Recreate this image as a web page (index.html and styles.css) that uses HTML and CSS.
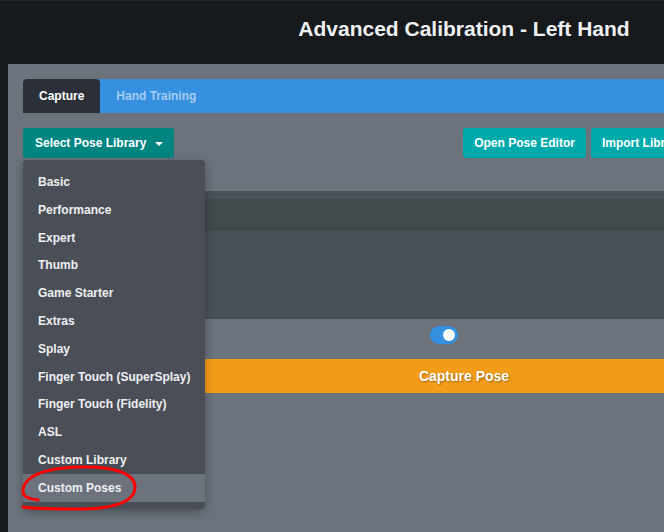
FILE: index.html
```html
<!DOCTYPE html>
<html lang="en">
<head>
  <meta charset="UTF-8">
  <meta name="viewport" content="width=device-width, initial-scale=1.0">
  <title>Advanced Calibration - Left Hand</title>
  <link rel="stylesheet" href="styles.css">
</head>
<body>
  <div class="app">
    <header class="topbar">
      <h1>Advanced Calibration - Left Hand</h1>
    </header>

    <main class="panel">
      <nav class="tabs">
        <a class="tab active">Capture</a>
        <a class="tab">Hand Training</a>
      </nav>

      <div class="toolbar">
        <div class="dropdown">
          <button class="btn btn-teal">Select Pose Library <span class="caret"></span></button>
          <ul class="dropdown-menu">
            <li>Basic</li>
            <li>Performance</li>
            <li>Expert</li>
            <li>Thumb</li>
            <li>Game Starter</li>
            <li>Extras</li>
            <li>Splay</li>
            <li>Finger Touch (SuperSplay)</li>
            <li>Finger Touch (Fidelity)</li>
            <li>ASL</li>
            <li>Custom Library</li>
            <li class="selected">Custom Poses</li>
            <!-- marker ring around the chosen entry -->
            <svg class="ring" width="122" height="54" viewBox="18 460 122 54">
              <path d="M 38 500 C 30 499, 22 497, 23 490 C 24 478, 40 468, 80 467 C 115 466, 136 474, 135 488 C 134 503, 110 509, 80 509 C 55 509, 35 509, 23 507" fill="none" stroke="#ff0000" stroke-width="3" stroke-linecap="round"/>
            </svg>
          </ul>
        </div>
        <div class="actions">
          <button class="btn btn-cyan">Open Pose Editor</button>
          <button class="btn btn-cyan">Import Library</button>
          <button class="btn btn-cyan">Export Poses</button>
          <button class="btn btn-cyan">Delete Library</button>
        </div>
      </div>

      <section class="card">
        <div class="card-header"></div>
        <div class="card-body"></div>
      </section>

      <div class="switch-row">
        <label class="switch"><span class="knob"></span></label>
      </div>

      <button class="capture">Capture Pose</button>
    </main>
  </div>
</body>
</html>
```

FILE: styles.css
```css
html, body {
  margin: 0;
  padding: 0;
  background: #171a1d;
  overflow: hidden;
}
body {
  font-family: "Liberation Sans", Arial, sans-serif;
  color: #fff;
}
.app {
  width: 920px;
  min-height: 532px;
}
.topbar {
  height: 64px;
  display: flex;
  align-items: center;
  justify-content: center;
  padding: 0 0 8px 8px;
  border-top: 1px solid #24272a;
  box-sizing: border-box;
}
.topbar h1 {
  margin: 0;
  font-size: 21px;
  font-weight: bold;
  color: #eef0f2;
}
.panel {
  margin-left: 8px;
  background: #6c737d;
  padding: 15px 15px 140px;
  min-height: 468px;
  box-sizing: border-box;
}
.tabs {
  display: flex;
  height: 34px;
  background: #3590e0;
}
.tab {
  display: flex;
  align-items: center;
  padding: 0 16px;
  font-size: 12px;
  font-weight: bold;
  color: #a6cbf1;
}
.tab.active {
  background: #2b3038;
  color: #fff;
  border-radius: 4px 4px 0 0;
}
.toolbar {
  display: flex;
  margin-top: 15px;
}
.actions {
  display: flex;
  gap: 5px;
  margin-left: auto;
}
.btn {
  height: 30px;
  padding: 0 11px;
  border: none;
  border-radius: 3px;
  font-family: inherit;
  font-size: 12px;
  font-weight: bold;
  color: #fff;
  white-space: nowrap;
}
.btn-teal {
  background: #008580;
  padding: 0 11px 0 12px;
}
.btn-cyan {
  background: #00aaab;
}
.caret {
  display: inline-block;
  margin-left: 5px;
  vertical-align: middle;
  border-left: 4px solid transparent;
  border-right: 4px solid transparent;
  border-top: 4px solid #fff;
}
.dropdown {
  position: relative;
}
.dropdown-menu {
  position: absolute;
  top: 32px;
  left: 0;
  z-index: 10;
  width: 182px;
  margin: 0;
  padding: 8px 0 7px;
  list-style: none;
  background: #4a4f57;
  border-radius: 4px;
  box-shadow: 0 3px 10px rgba(0, 0, 0, 0.3);
}
.dropdown-menu li {
  box-sizing: border-box;
  height: 27.8px;
  line-height: 25.8px;
  padding: 2px 15px 0;
  font-size: 12px;
  font-weight: bold;
  color: #eef0f2;
  white-space: nowrap;
}
.dropdown-menu li.selected {
  background: #6c737d;
}
.ring {
  position: absolute;
  left: -5px;
  top: 300px;
}
.card {
  margin-top: 33px;
  background: #4a5058;
  padding-top: 8px;
}
.card-header {
  height: 32px;
  background: #434a4d;
}
.card-body {
  height: 88px;
}
.switch-row {
  height: 40px;
  display: flex;
  align-items: center;
  justify-content: center;
  padding: 0 40px 8px 0;
  box-sizing: border-box;
}
.switch {
  width: 28px;
  height: 18px;
  border-radius: 9px;
  background: #3590e0;
  display: flex;
  align-items: center;
  justify-content: flex-end;
  padding: 0 3px;
  box-sizing: border-box;
}
.knob {
  width: 12px;
  height: 12px;
  border-radius: 50%;
  background: #fff;
}
.capture {
  display: block;
  width: 100%;
  height: 34px;
  border: none;
  background: #f39c1a;
  font-family: inherit;
  font-size: 14px;
  font-weight: bold;
  color: #fff;
  text-shadow: 1px 1px 2px rgba(0, 0, 0, 0.35);
}
```
